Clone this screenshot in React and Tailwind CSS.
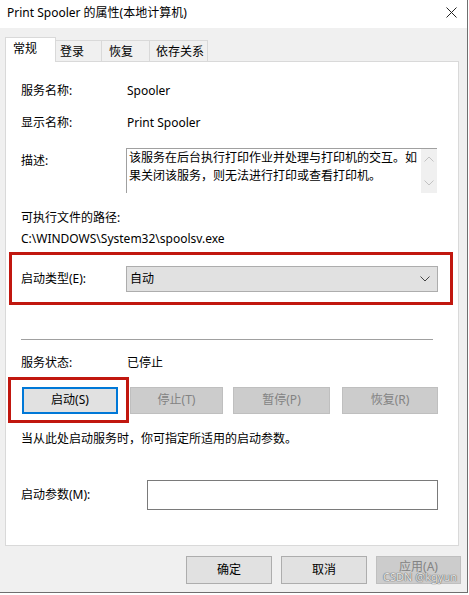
import React from "react";

function Chevron({ className }) {
  return (
    <svg width="10" height="6" viewBox="0 0 10 6" className={className}>
      <path d="M0.5 0.5 L5 5 L9.5 0.5" fill="none" stroke="currentColor" strokeWidth="1" />
    </svg>
  );
}

export default function App() {
  return (
    <div className="w-[469px] h-[595px] bg-white text-[12px] leading-[16px] text-black font-['Noto_Sans','Noto_Sans_CJK_SC',sans-serif]">
      <div className="w-[468px] h-[593px] bg-[#f0f0f0] border-r border-b border-[#6f6f6f] flex flex-col">
        {/* title bar */}
        <div className="h-[28px] bg-white flex items-center justify-between pl-[7px] pr-[10px] shrink-0">
          <span className="text-[12px] mt-[-2px]">Print Spooler 的属性(本地计算机)</span>
          <svg width="11" height="11" viewBox="0 0 11 11" className="mt-[-4px] text-[#222]">
            <path d="M0.5 0.5 L10.5 10.5 M10.5 0.5 L0.5 10.5" stroke="currentColor" strokeWidth="1" />
          </svg>
        </div>

        {/* tabs */}
        <div className="flex items-end pl-[5px] pt-[9px] shrink-0">
          <div className="relative z-10 -mb-px h-[25px] w-[51px] bg-white border border-b-0 border-[#d9d9d9] pl-[7px] pt-[3px]">常规</div>
          <div className="h-[21px] w-[46px] border-t border-r border-[#d9d9d9] pl-[4px] pt-[3px]">登录</div>
          <div className="h-[21px] w-[48px] border-t border-r border-[#d9d9d9] pl-[7px] pt-[3px]">恢复</div>
          <div className="h-[21px] w-[58px] border-t border-r border-[#d9d9d9] pl-[6px] pt-[3px]">依存关系</div>
        </div>

        {/* panel */}
        <div className="ml-[5px] w-[454px] h-[485px] bg-white border border-[#d9d9d9] flex flex-col shrink-0">
          <div className="flex mt-[21px] pl-[15px]">
            <span className="w-[106px]">服务名称:</span>
            <span>Spooler</span>
          </div>
          <div className="flex mt-[16px] pl-[15px]">
            <span className="w-[106px]">显示名称:</span>
            <span>Print Spooler</span>
          </div>
          <div className="flex mt-[17px] pl-[15px]">
            <span className="w-[105px] pt-[5px]">描述:</span>
            <div className="w-[311px] h-[45px] border-t border-l border-[#a0a0a0] flex">
              <div className="flex-1 pl-[2px] leading-[18px]">
                <div className="whitespace-nowrap">该服务在后台执行打印作业并处理与打印机的交互。如</div>
                <div className="whitespace-nowrap">果关闭该服务，则无法进行打印或查看打印机。</div>
              </div>
              <div className="w-[16px] bg-[#f0f0f0] flex flex-col items-center justify-between py-[7px] text-[#c2c2c2]">
                <Chevron className="rotate-180" />
                <Chevron />
              </div>
            </div>
          </div>
          <div className="mt-[17px] pl-[15px]">可执行文件的路径:</div>
          <div className="mt-[5px] pl-[15px]">C:\WINDOWS\System32\spoolsv.exe</div>

          {/* red box 1 */}
          <div className="mt-[5px] ml-[3px] w-[444px] h-[53px] border-[3px] border-[#c1170f] flex items-center pl-[9px]">
            <span className="w-[105px]">启动类型(E):</span>
            <div className="w-[312px] h-[26px] bg-[#e1e1e1] border border-[#adadad] flex items-center justify-between pl-[3px] pr-[7px]">
              <span>自动</span>
              <Chevron className="text-[#444]" />
            </div>
          </div>

          <div className="mt-[34px] ml-[15px] w-[412px] h-px bg-[#a0a0a0]" />

          <div className="flex mt-[15px] pl-[15px]">
            <span className="w-[106px]">服务状态:</span>
            <span>已停止</span>
          </div>

          <div className="flex items-center mt-[6px] ml-[2px]">
            <div className="w-[121px] h-[46px] border-[3px] border-[#c1170f] flex items-center pl-[11px]">
              <div className="w-[96px] h-[27px] bg-[#e1e1e1] border-2 border-[#0078d7] flex items-center justify-center">启动(S)</div>
            </div>
            <div className="ml-px w-[93px] h-[27px] bg-[#cccccc] border border-[#bfbfbf] text-[#838383] flex items-center justify-center">停止(T)</div>
            <div className="ml-[10px] w-[97px] h-[27px] bg-[#cccccc] border border-[#bfbfbf] text-[#838383] flex items-center justify-center">暂停(P)</div>
            <div className="ml-[12px] w-[96px] h-[27px] bg-[#cccccc] border border-[#bfbfbf] text-[#838383] flex items-center justify-center">恢复(R)</div>
          </div>

          <div className="mt-[8px] pl-[15px]">当从此处启动服务时，你可指定所适用的启动参数。</div>

          <div className="flex items-center mt-[33px] pl-[15px]">
            <span className="w-[126px]">启动参数(M):</span>
            <div className="w-[291px] h-[30px] border border-[#7a7a7a] bg-white" />
          </div>
        </div>

        {/* bottom buttons */}
        <div className="flex mt-[10px] pl-[186px]">
          <div className="w-[86px] h-[28px] bg-[#e1e1e1] border border-[#adadad] flex items-center justify-center">确定</div>
          <div className="ml-[9px] w-[86px] h-[28px] bg-[#e1e1e1] border border-[#adadad] flex items-center justify-center">取消</div>
          <div className="relative ml-[9px] w-[85px] h-[28px] bg-[#cccccc] border border-[#bfbfbf] text-[#838383] flex justify-center pt-[2px]">
            应用(A)
            <span className="absolute left-[6px] bottom-[0px] whitespace-nowrap text-[11px] leading-[12px] text-[#e8e8e8] [text-shadow:0_0_1px_#555,0_0_1px_#555]">CSDN @kgyun</span>
          </div>
        </div>
      </div>
    </div>
  );
}
